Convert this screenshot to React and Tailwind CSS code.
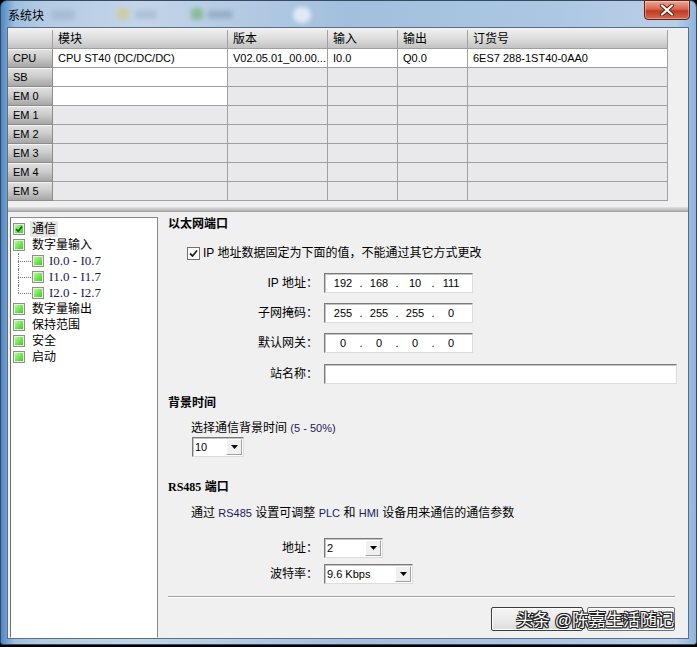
import React from "react"

const rowNames = ["CPU", "SB", "EM 0", "EM 1", "EM 2", "EM 3", "EM 4", "EM 5"]
const cpuRow = ["CPU ST40 (DC/DC/DC)", "V02.05.01_00.00...", "I0.0", "Q0.0", "6ES7 288-1ST40-0AA0"]
const headers = ["模块", "版本", "输入", "输出", "订货号"]

const sunken = "border border-t-[#7a7a7a] border-l-[#7a7a7a] border-r-[#dcdcdc] border-b-[#dcdcdc] bg-white shadow-[inset_1px_1px_0_#c4c4c4]"

function GreenBox({ checked }) {
  return (
    <span className="flex h-[12px] w-[12px] shrink-0 items-center justify-center border border-[#8e8e8e] bg-[#e2f4da]">
      <span className="flex h-[8px] w-[8px] items-center justify-center bg-[linear-gradient(135deg,#b6f79a,#3fcf1c)]">
        {checked && (
          <svg width="8" height="8" viewBox="0 0 8 8">
            <path d="M1 4 L3.2 6.2 L7 1.5" stroke="#1d5e10" strokeWidth="1.7" fill="none" />
          </svg>
        )}
      </span>
    </span>
  )
}

function TreeItem({ label, checked, selected }) {
  return (
    <div className="flex h-[16px] items-center pl-[2px]">
      <GreenBox checked={checked} />
      <span className={selected ? "ml-[5px] bg-[#e6e6e6] px-[2px]" : "ml-[7px]"}>{label}</span>
    </div>
  )
}

function SubItem({ label, last }) {
  return (
    <div className="flex h-[16px] items-stretch">
      <span className="flex w-[13px] flex-col">
        <span className="flex-1 border-l border-dotted border-[#7a7a7a]" />
        <span className={last ? "flex-1 border-t border-dotted border-[#7a7a7a]" : "flex-1 border-l border-t border-dotted border-[#7a7a7a]"} />
      </span>
      <span className="flex items-center pl-px">
        <GreenBox />
      </span>
      <span className="ml-[5px] flex items-center font-['Liberation_Serif','Noto_Sans_CJK_SC',serif] text-[13px] text-[#1c1c4a]">{label}</span>
    </div>
  )
}

function IpBox({ parts }) {
  return (
    <div className={`flex h-[20px] w-[149px] items-center pl-[3px] text-[11px] ${sunken}`}>
      {parts.map((p, i) => (
        <React.Fragment key={i}>
          {i > 0 && <span className="w-[6px] text-center">.</span>}
          <span className="w-[30px] text-center">{p}</span>
        </React.Fragment>
      ))}
    </div>
  )
}

function Combo({ value, className }) {
  return (
    <div className={`flex h-[20px] items-stretch ${sunken} ${className}`}>
      <span className="flex-1 pl-[2px] text-[11px] leading-[18px]">{value}</span>
      <span className="m-px flex w-[16px] items-center justify-center border border-t-white border-l-white border-r-[#a0a0a0] border-b-[#a0a0a0] bg-[#f0f0f0]">
        <svg width="7" height="4" viewBox="0 0 7 4">
          <path d="M0 0 H7 L3.5 4 Z" fill="#000" />
        </svg>
      </span>
    </div>
  )
}

function FieldRow({ label, children, className }) {
  return (
    <div className={`flex items-center ${className}`}>
      <span className="w-[150px] shrink-0 text-right">{label}</span>
      <span className="ml-[6px]">{children}</span>
    </div>
  )
}

export default function App() {
  return (
    <div className="relative h-[647px] w-[697px] overflow-hidden bg-black font-['Liberation_Sans','Noto_Sans_CJK_SC',sans-serif] text-[12px] leading-[16px] text-black">
      {/* window frame */}
      <div className="relative flex h-[645px] w-[697px] flex-col rounded-t-[7px] rounded-b-[3px] border border-[#3a4a5e] bg-[linear-gradient(90deg,#4f88c6_0%,#9fbfe0_2%,#b4cbe3_6%,#c3d5e9_20%,#a3bfdd_50%,#adc7e3_80%,#b9cfe7_97%,#8fb4dc_100%)]">
        {/* title */}
        <div className="relative flex h-[27px] shrink-0 items-center pl-[7px]">
          <span className="absolute left-[50px] top-[9px] h-[10px] w-[24px] rounded bg-[#8fa6bf] opacity-40 blur-[2px]" />
          <span className="absolute left-[116px] top-[7px] h-[12px] w-[12px] rounded bg-[#d9c77a] opacity-60 blur-[2px]" />
          <span className="absolute left-[134px] top-[9px] h-[9px] w-[22px] rounded bg-[#8fa6bf] opacity-40 blur-[2px]" />
          <span className="absolute left-[190px] top-[7px] h-[12px] w-[12px] rounded bg-[#6fae6a] opacity-60 blur-[2px]" />
          <span className="absolute left-[206px] top-[9px] h-[9px] w-[26px] rounded bg-[#7d96b2] opacity-50 blur-[2px]" />
          <span className="absolute left-[292px] top-[6px] h-[16px] w-[18px] rounded-full bg-[#eef4fa] opacity-80 blur-[2px]" />
          <span className="relative mt-[2px] text-[12px]">系统块</span>
          <div className="absolute right-[6px] top-[-1px] flex h-[20px] w-[46px] items-center justify-center rounded-b-[4px] border border-[#5e2218] bg-[linear-gradient(#eaa897,#d7664f_45%,#c23a22_55%,#d4694f)] shadow-[inset_0_0_0_1px_rgba(255,255,255,0.35)]">
            <svg width="14" height="12" viewBox="0 0 14 12">
              <path d="M2 1.5 L12 10.5 M12 1.5 L2 10.5" stroke="#5a1e14" strokeWidth="4" strokeLinecap="round" />
              <path d="M2 1.5 L12 10.5 M12 1.5 L2 10.5" stroke="#fff" strokeWidth="2.2" strokeLinecap="round" />
            </svg>
          </div>
        </div>

        {/* client area */}
        <div className="ml-[7px] flex h-[610px] w-[680px] flex-col bg-[#f0f0f0] shadow-[0_0_0_1px_#5a6e86]">
          {/* module table */}
          <div className="mt-[2px] grid w-[660px] grid-cols-[45px_175px_100px_70px_70px_200px]">
            <div className="h-[19px] border-b border-r border-[#a0a0a0] bg-[linear-gradient(#eeeeee,#dcdcdc_50%,#c2c2c2)]" />
            {headers.map((h) => (
              <div key={h} className="flex h-[19px] items-center border-b border-r border-[#a0a0a0] bg-[linear-gradient(#eeeeee,#dcdcdc_50%,#c2c2c2)] pl-[5px]">
                {h}
              </div>
            ))}
            {rowNames.map((r, ri) => (
              <React.Fragment key={r}>
                <div className="flex h-[19px] items-center border-b border-r border-[#8c8c8c] bg-[linear-gradient(#e2e2e2,#cdcdcd_45%,#a6a6a6)] pl-[5px] text-[11px] shadow-[inset_0_1px_0_#f4f4f4]">
                  {r}
                </div>
                {headers.map((h, ci) => {
                  const white = ri === 0 || (ci === 0 && ri < 3)
                  return (
                    <div
                      key={h}
                      className={`flex h-[19px] items-center border-b border-r border-[#a0a0a0] pl-[5px] text-[11px] ${white ? "bg-white" : "bg-[#e9e9eb]"}`}
                    >
                      {ri === 0 ? cpuRow[ci] : ""}
                    </div>
                  )
                })}
              </React.Fragment>
            ))}
          </div>

          {/* splitter */}
          <div className="h-[6px] shrink-0" />
          <div className="h-[5px] shrink-0 bg-[linear-gradient(#e2e2e2,#c4c4c4_50%,#9c9c9c)]" />

          {/* lower area */}
          <div className="flex flex-1">
            {/* tree */}
            <div className="ml-[2px] mt-[5px] w-[148px] shrink-0 border border-t-[#8a8a8a] border-l-[#6f6f6f] border-r-[#8a8a8a] border-b-white bg-white pt-[3px]">
              <TreeItem label="通信" checked selected />
              <TreeItem label="数字量输入" />
              <div className="ml-[7px]">
                <SubItem label="I0.0 - I0.7" />
                <SubItem label="I1.0 - I1.7" />
                <SubItem label="I2.0 - I2.7" last />
              </div>
              <TreeItem label="数字量输出" />
              <TreeItem label="保持范围" />
              <TreeItem label="安全" />
              <TreeItem label="启动" />
            </div>

            {/* settings panel */}
            <div className="flex min-w-0 flex-1 flex-col pl-[10px] pr-[11px]">
              <div className="mt-[4px] font-bold">以太网端口</div>
              <div className="mt-[13px] flex items-center pl-[19px]">
                <span className="flex h-[13px] w-[13px] items-center justify-center border border-[#707070] bg-white">
                  <svg width="9" height="9" viewBox="0 0 9 9">
                    <path d="M1 4.5 L3.5 7 L8 1.5" stroke="#222" strokeWidth="1.8" fill="none" />
                  </svg>
                </span>
                <span className="ml-[3px]">IP 地址数据固定为下面的值，不能通过其它方式更改</span>
              </div>
              <FieldRow label="IP 地址：" className="mt-[12px]">
                <IpBox parts={["192", "168", "10", "111"]} />
              </FieldRow>
              <FieldRow label="子网掩码：" className="mt-[10px]">
                <IpBox parts={["255", "255", "255", "0"]} />
              </FieldRow>
              <FieldRow label="默认网关：" className="mt-[10px]">
                <IpBox parts={["0", "0", "0", "0"]} />
              </FieldRow>
              <FieldRow label="站名称：" className="mt-[11px]">
                <div className={`h-[20px] w-[353px] ${sunken}`} />
              </FieldRow>

              <div className="mt-[11px] font-bold">背景时间</div>
              <div className="mt-[9px] pl-[23px]">
                选择通信背景时间 <span className="text-[11px] text-[#1a1a5a]">(5 - 50%)</span>
              </div>
              <div className="mt-px pl-[24px]">
                <Combo value="10" className="w-[52px]" />
              </div>

              <div className="mt-[22px] font-bold">
                <span className="font-['Liberation_Serif',serif]">RS485</span> 端口
              </div>
              <div className="mt-[10px] pl-[23px]">
                通过 <span className="text-[11px] text-[#1a1a5a]">RS485</span> 设置可调整 <span className="text-[11px] text-[#1a1a5a]">PLC</span> 和 <span className="text-[11px] text-[#1a1a5a]">HMI</span> 设备用来通信的通信参数
              </div>
              <FieldRow label="地址：" className="mt-[17px]">
                <Combo value="2" className="w-[59px]" />
              </FieldRow>
              <FieldRow label="波特率：" className="mt-[6px]">
                <Combo value="9.6 Kbps" className="w-[89px]" />
              </FieldRow>

              <div className="mr-[2px] mt-[12px] h-[2px] border-t border-b border-t-[#a0a0a0] border-b-white" />

              <div className="mr-[2px] mt-[9px] flex justify-end gap-[4px]">
                <button className="h-[24px] w-[92px] rounded-[2px] border border-[#3c3c3c] bg-[linear-gradient(#f4f4f4,#ebebeb_50%,#dcdcdc)] text-[12px] shadow-[inset_0_0_0_1px_#fff]">
                  确定
                </button>
                <button className="h-[24px] w-[88px] rounded-[2px] border border-[#707070] bg-[linear-gradient(#f4f4f4,#ebebeb_50%,#dcdcdc)] text-[12px] shadow-[inset_0_0_0_1px_#fff]">
                  取消
                </button>
              </div>
            </div>
          </div>
        </div>
      </div>

      {/* watermark */}
      <div className="absolute left-[516px] top-[610px] text-[17px] leading-[22px] text-white [text-shadow:1px_1px_0_#222,-1px_-1px_0_#222,1px_-1px_0_#222,-1px_1px_0_#222,0_1px_0_#222,1px_0_0_#222]">
        头条 @陈嘉生活随记
      </div>
    </div>
  )
}
